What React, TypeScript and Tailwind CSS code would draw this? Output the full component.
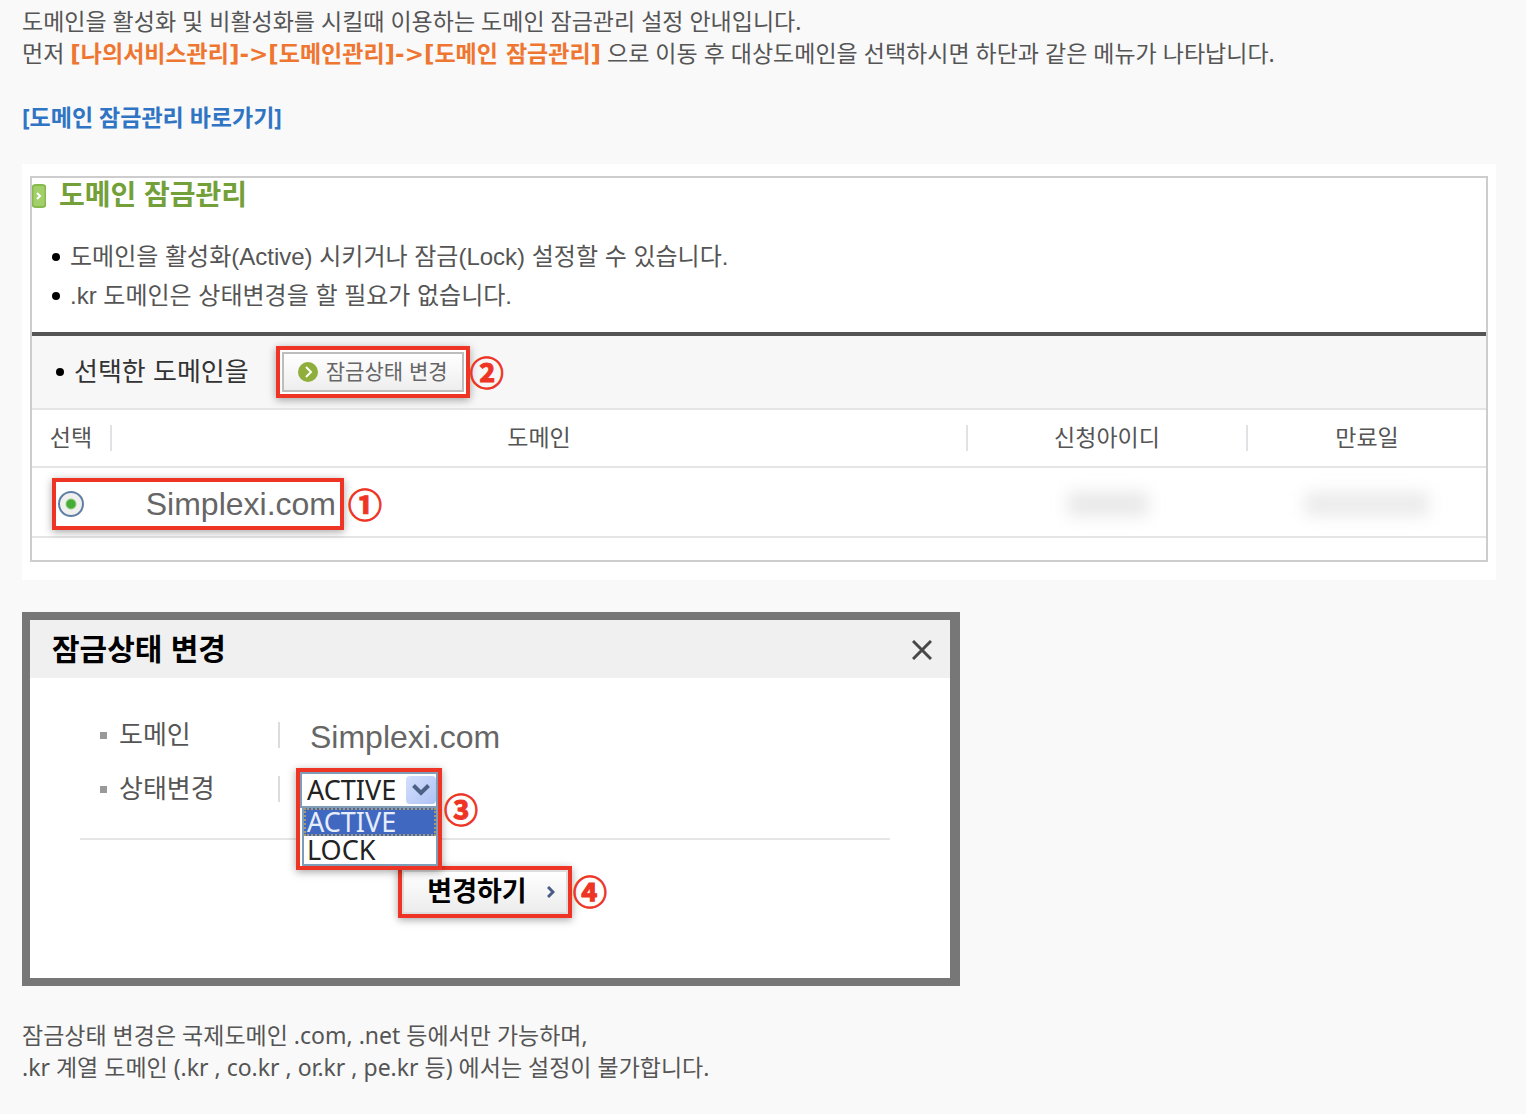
import { useState } from 'react';

const KO = "font-['Noto_Sans','Noto_Sans_CJK_KR',sans-serif]";
const PANEL = "font-['Liberation_Sans','Noto_Sans_CJK_KR',sans-serif]";

function Step({ mark }: { mark: string }) {
  return (
    <span className="text-[34px] leading-[34px] font-bold text-[#ee3424] font-['Noto_Sans_CJK_KR',sans-serif] [-webkit-text-stroke:1px_#ee3424]">
      {mark}
    </span>
  );
}

function Dot() {
  return <span className="size-2 shrink-0 rounded-full bg-black" />;
}

function HeadCell({ label, last = false }: { label: string; last?: boolean }) {
  return (
    <th className="h-[57px] p-0 font-normal">
      <div className={`flex h-[26px] items-center justify-center ${last ? '' : 'border-r-2 border-[#e2e2e6]'}`}>
        {label}
      </div>
    </th>
  );
}

function DomainPanel() {
  const [checked, setChecked] = useState(true);

  return (
    <section className={`bg-white px-2 pt-3 pb-[18px] text-[#555] ${PANEL}`}>
      <div className="border-2 border-[#cdcdcd]">
        <h2 className="flex h-9 items-center gap-[13px] text-[28px] leading-9 font-bold text-[#74a03a]">
          <svg className="h-6 w-[14px]" viewBox="0 0 14 24" fill="none">
            <rect x="0.5" y="1" width="13" height="22" rx="3" fill="#a3cf6b" stroke="#86bb4b" strokeWidth="2" />
            <path d="M5 9l3 3-3 3" stroke="#fff" strokeWidth="2" />
          </svg>
          도메인 잠금관리
        </h2>

        <ul className="pt-[23px] pb-[17px] pl-5 text-2xl leading-[39px]">
          <li className="flex items-center gap-[10px]">
            <Dot />
            도메인을 활성화(Active) 시키거나 잠금(Lock) 설정할 수 있습니다.
          </li>
          <li className="flex items-center gap-[10px]">
            <Dot />
            .kr 도메인은 상태변경을 할 필요가 없습니다.
          </li>
        </ul>

        <div className="flex h-[78px] items-center border-t-4 border-b-2 border-t-[#555] border-b-[#e5e5e5] bg-[#f7f7f7] pl-6">
          <Dot />
          <span className="ml-[10px] text-[26px] leading-8 text-[#333]">선택한 도메인을</span>
          <span className="ml-[27px] border-4 border-[#ee3424] bg-white p-[2px] shadow-[0_2px_8px_rgba(0,0,0,0.35)]">
            <button
              type="button"
              className="flex h-10 w-[182px] items-center justify-center gap-2 border-2 border-[#bdbdbd] bg-linear-to-b from-white to-[#eee] text-[21px] leading-6 text-[#666]"
            >
              <svg className="size-5" viewBox="0 0 20 20" fill="none">
                <circle cx="10" cy="10" r="10" fill="#8fae3c" />
                <path d="M8 5l5 5-5 5" stroke="#fff" strokeWidth="2" />
              </svg>
              잠금상태 변경
            </button>
          </span>
          <Step mark="②" />
        </div>

        <table className="w-full table-fixed border-collapse text-[23px] leading-7">
          <colgroup>
            <col className="w-20" />
            <col />
            <col className="w-[280px]" />
            <col className="w-[238px]" />
          </colgroup>
          <thead>
            <tr className="border-b-2 border-[#e5e5e5]">
              <HeadCell label="선택" />
              <HeadCell label="도메인" />
              <HeadCell label="신청아이디" />
              <HeadCell label="만료일" last />
            </tr>
          </thead>
          <tbody>
            <tr className="border-b-2 border-[#e5e5e5]">
              <td colSpan={2} className="h-[70px] pt-1 pr-0 pb-0 pl-5">
                <div className="flex items-center gap-1">
                  <label className="flex h-[52px] w-[292px] items-center justify-between border-4 border-[#ee3424] pr-1 pl-[2px] text-[32px] leading-10 text-[#666] shadow-[0_2px_8px_rgba(0,0,0,0.35)]">
                    <input
                      type="radio"
                      name="domain"
                      checked={checked}
                      onChange={() => setChecked(true)}
                      className="size-[26px] appearance-none rounded-full border-2 border-[#5f80a6] bg-[#f0f0ee] checked:bg-[radial-gradient(circle,#45ad35_0,#45ad35_4px,#f0f0ee_6px)]"
                    />
                    Simplexi.com
                  </label>
                  <Step mark="①" />
                </div>
              </td>
              <td className="px-0 pt-1 pb-0">
                <div className="mx-auto h-6 w-20 bg-[#e8e8e8] blur-[8px]" />
              </td>
              <td className="px-0 pt-1 pb-0">
                <div className="mx-auto h-6 w-[124px] bg-[#ebebeb] blur-[8px]" />
              </td>
            </tr>
          </tbody>
        </table>
        <div className="h-[22px]" />
      </div>
    </section>
  );
}

function StatusSelect() {
  const [status, setStatus] = useState('ACTIVE');

  return (
    <div className="absolute top-[6px] left-0 z-10 h-[102px] w-[146px] border-4 border-[#ee3424] bg-white text-[27px] leading-7 text-[#222] shadow-[0_2px_8px_rgba(0,0,0,0.35)] font-['Noto_Sans',sans-serif]">
      <div className="relative">
        <select
          id="status"
          value={status}
          onChange={(e) => setStatus(e.target.value)}
          className="block h-9 w-full appearance-none border-2 border-[#7f9db9] bg-white pl-[5px] leading-7"
        >
          <option>ACTIVE</option>
          <option>LOCK</option>
        </select>
        <span className="pointer-events-none absolute top-1 right-[2px] flex h-7 w-[30px] items-center justify-center rounded-sm bg-linear-to-br from-[#d3dffc] to-[#afc2f4]">
          <svg className="h-3 w-[18px]" viewBox="0 0 18 12" fill="none">
            <path d="M1.5 1.5L9 9l7.5-7.5" stroke="#4d6185" strokeWidth="4" />
          </svg>
        </span>
      </div>
      <ul className="ml-[2px] border-2 border-t-0 border-[#7f9db9]">
        <li className="h-7 border-2 border-dotted border-[#a89a6c] bg-[#4168c0] pl-px leading-6 text-[#e6edfb]">ACTIVE</li>
        <li className="h-7 pl-[3px]">LOCK</li>
      </ul>
      <span className="absolute top-5 left-full ml-[6px] flex">
        <Step mark="③" />
      </span>
    </div>
  );
}

function StatusDialog() {
  return (
    <section className={`mt-8 w-full max-w-[938px] border-8 border-r-[10px] border-[#777] bg-white ${PANEL}`}>
      <header className="flex h-[58px] items-center justify-between bg-[#f0f0f0] pt-[2px] pr-[18px] pl-[22px]">
        <h2 className="text-[30px] leading-10 font-bold text-black">잠금상태 변경</h2>
        <button type="button" aria-label="닫기">
          <svg className="size-5" viewBox="0 0 20 20" fill="none">
            <path d="M1 1l18 18M19 1L1 19" stroke="#484848" strokeWidth="3" />
          </svg>
        </button>
      </header>

      <div className="pt-[30px] pr-[60px] pb-[60px] pl-[50px] text-[26px] leading-8 text-[#555]">
        <div className="flex h-[54px] items-center">
          <span className="flex w-[198px] items-center gap-3 pl-5">
            <span className="size-[7px] bg-[#999]" />
            도메인
          </span>
          <span className="h-[26px] w-[2px] bg-[#dcdcdc]" />
          <span className="ml-[30px] pt-1 text-[32px] leading-10 text-[#666]">Simplexi.com</span>
        </div>
        <div className="flex h-[54px] items-center">
          <label htmlFor="status" className="flex w-[198px] items-center gap-3 pl-5">
            <span className="size-[7px] bg-[#999]" />
            상태변경
          </label>
          <span className="h-[26px] w-[2px] bg-[#dcdcdc]" />
          <div className="relative ml-4 h-full w-[146px]">
            <StatusSelect />
          </div>
        </div>

        <div className="mt-[22px] flex justify-center border-t-2 border-[#e6e6e6] pt-[26px]">
          <div className="relative border-4 border-[#ee3424] shadow-[0_2px_8px_rgba(0,0,0,0.35)]">
            <button
              type="button"
              className="flex h-11 w-[166px] items-center justify-center gap-5 border-2 border-[#dedede] bg-linear-to-b from-white to-[#ececec] pl-3 text-[27px] leading-8 font-bold text-black"
            >
              변경하기
              <svg className="h-3 w-2" viewBox="0 0 8 12" fill="none">
                <path d="M1 1l5 5-5 5" stroke="#4a5c86" strokeWidth="3" />
              </svg>
            </button>
            <span className="absolute top-1 left-full ml-[5px] flex">
              <Step mark="④" />
            </span>
          </div>
        </div>
      </div>
    </section>
  );
}

export default function App() {
  return (
    <main className={`min-h-screen bg-[#f9f9f9] pt-[5px] pr-[30px] pb-7 pl-[22px] text-[23px] leading-8 text-[#555] ${KO}`}>
      <p>도메인을 활성화 및 비활성화를 시킬때 이용하는 도메인 잠금관리 설정 안내입니다.</p>
      <p>
        먼저{' '}
        <strong className="leading-6 text-[#ef7630] font-['DejaVu_Sans','Noto_Sans_CJK_KR',sans-serif]">
          [나의서비스관리]-&gt;[도메인관리]-&gt;[도메인 잠금관리]
        </strong>{' '}
        으로 이동 후 대상도메인을 선택하시면 하단과 같은 메뉴가 나타납니다.
      </p>
      <p className="mt-8 mb-[31px]">
        <a href="#lock" className="font-bold text-[#3074c4]">
          [도메인 잠금관리 바로가기]
        </a>
      </p>

      <DomainPanel />
      <StatusDialog />

      <p className="mt-[33px]">잠금상태 변경은 국제도메인 .com, .net 등에서만 가능하며,</p>
      <p>.kr 계열 도메인 (.kr , co.kr , or.kr , pe.kr 등) 에서는 설정이 불가합니다.</p>
    </main>
  );
}
